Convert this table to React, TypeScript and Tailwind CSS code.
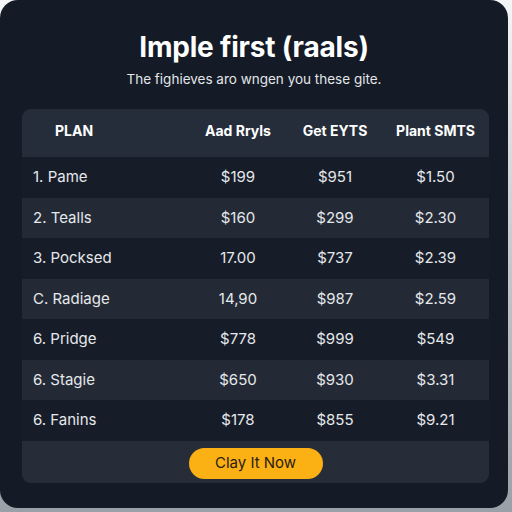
import React from "react";

const rows = [
  ["1. Pame", "$199", "$951", "$1.50"],
  ["2. Tealls", "$160", "$299", "$2.30"],
  ["3. Pocksed", "17.00", "$737", "$2.39"],
  ["C. Radiage", "14,90", "$987", "$2.59"],
  ["6. Pridge", "$778", "$999", "$549"],
  ["6. Stagie", "$650", "$930", "$3.31"],
  ["6. Fanins", "$178", "$855", "$9.21"],
];

export default function App() {
  return (
    <div className="w-[512px] h-[512px] bg-gradient-to-b from-[#f4f5f6] to-[#9aa0a8]" style={{ fontFamily: "Inter, 'Noto Sans', sans-serif" }}>
      <div className="w-[508px] h-[508px] rounded-[18px] bg-[#141b27] flex flex-col">
        <h1 className="mt-[31px] text-center text-[28px] leading-[32px] font-bold text-white tracking-[-0.2px]">Imple first (raals)</h1>
        <p className="mt-[7px] text-center text-[13.5px] leading-[18px] text-[#e3e5e8]">The fighieves aro wngen you these gite.</p>
        <div className="mt-[21px] w-[467px] ml-[22px] rounded-[9px] overflow-hidden bg-[#232a36]">
          <div className="grid grid-cols-[166px_100px_94px_107px] h-[48px] bg-[#252d3a] text-white font-bold text-[14px] pt-[11px]">
            <div className="pl-[33px]">PLAN</div>
            <div className="text-center">Aad Rryls</div>
            <div className="text-center">Get EYTS</div>
            <div className="text-center">Plant SMTS</div>
          </div>
          {rows.map((r, i) => (
            <div
              key={i}
              className={`grid grid-cols-[166px_100px_94px_107px] items-center text-[15px] text-[#e6e8eb] ${i % 2 === 0 ? "h-[41px] bg-[#161d29]" : "h-[40px] bg-[#232a36]"}`}
            >
              <div className="pl-[11px]">{r[0]}</div>
              <div className="text-center">{r[1]}</div>
              <div className="text-center">{r[2]}</div>
              <div className="text-center">{r[3]}</div>
            </div>
          ))}
          <div className="h-[42px] flex items-start justify-center pt-[7px] bg-[#262d39]">
            <button className="w-[134px] h-[31px] rounded-full bg-[#fbb014] text-[#2a2010] text-[15px]">Clay It Now</button>
          </div>
        </div>
      </div>
    </div>
  );
}
